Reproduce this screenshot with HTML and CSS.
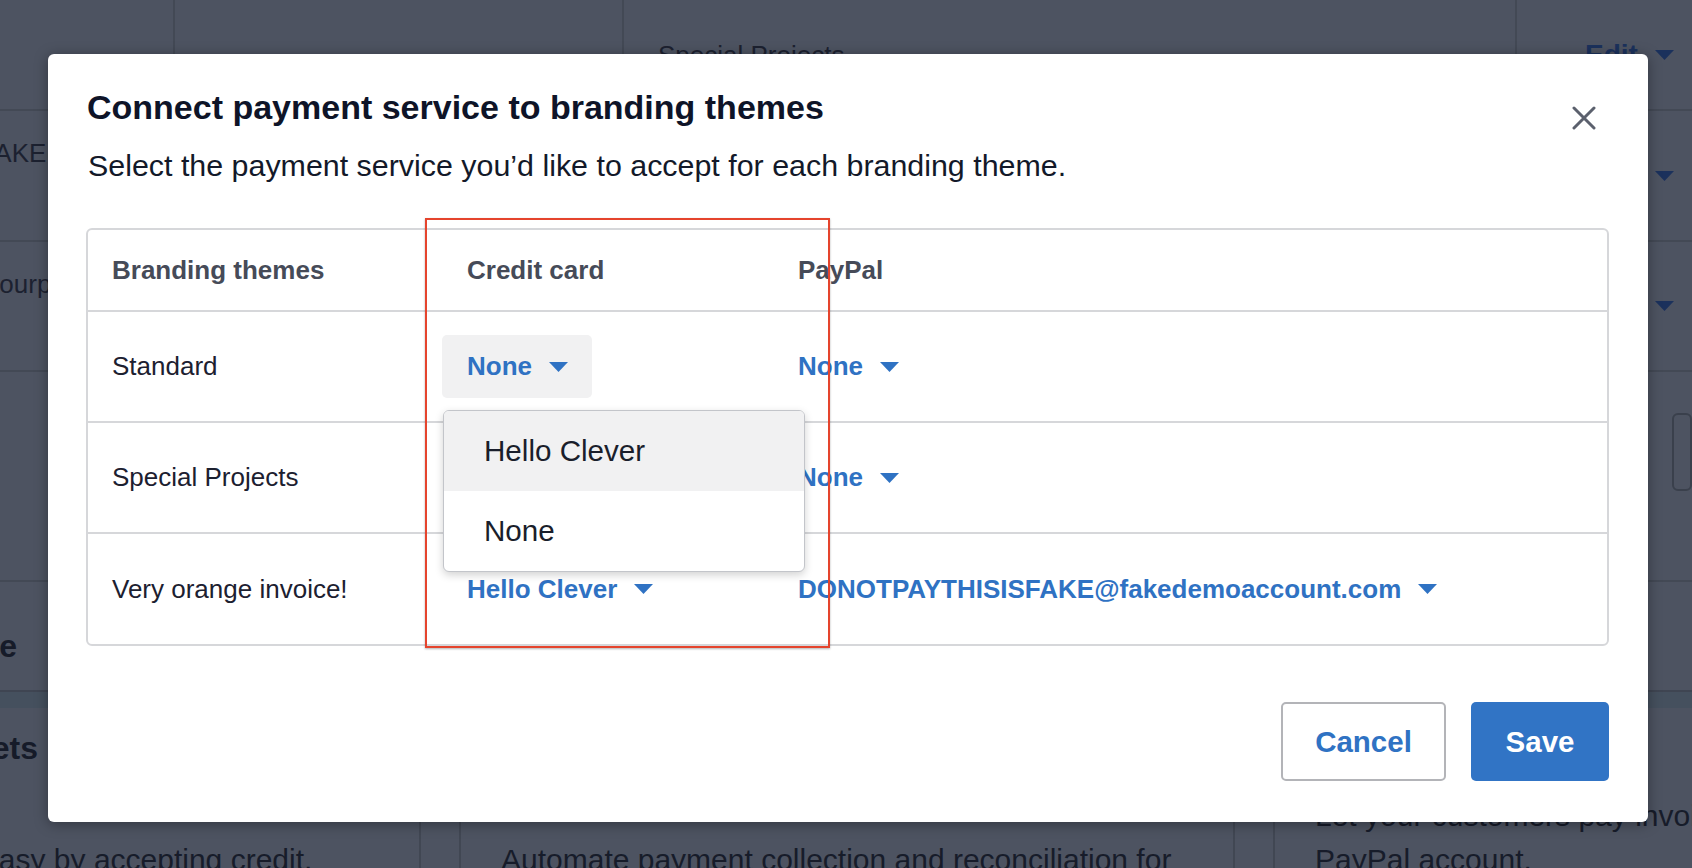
FILE: index.html
```html
<!DOCTYPE html>
<html lang="en">
<head>
<meta charset="utf-8">
<title>Connect payment service to branding themes</title>
<link rel="stylesheet" href="styles.css">
</head>
<body>
  <div class="page">
    <div class="bg-table">
      <div class="bg-row r1">
        <div class="bg-cell"></div>
        <div class="bg-cell"></div>
        <div class="bg-cell c3"><span class="bg-text">Special Projects</span></div>
        <div class="bg-cell c4"><span class="bg-edit">Edit <svg class="caret" viewBox="0 0 19 10" width="19" height="10"><path d="M0 0h19L9.5 10z" fill="currentColor"/></svg></span></div>
      </div>
      <div class="bg-row r2">
        <div class="bg-cell c1"><span class="bg-text shift-email">DONOTPAYTHISISFAKE@fakedemoaccount.com</span></div>
        <div class="bg-cell"></div>
        <div class="bg-cell"></div>
        <div class="bg-cell c4"><span class="bg-edit">Edit <svg class="caret" viewBox="0 0 19 10" width="19" height="10"><path d="M0 0h19L9.5 10z" fill="currentColor"/></svg></span></div>
      </div>
      <div class="bg-row r3">
        <div class="bg-cell c1"><span class="bg-text shift-purpose">hello@yourpurpose.com</span></div>
        <div class="bg-cell"></div>
        <div class="bg-cell"></div>
        <div class="bg-cell c4"><span class="bg-edit">Edit <svg class="caret" viewBox="0 0 19 10" width="19" height="10"><path d="M0 0h19L9.5 10z" fill="currentColor"/></svg></span></div>
      </div>
      <div class="bg-row r4">
        <div class="bg-cell"></div>
        <div class="bg-cell"></div>
        <div class="bg-cell"></div>
        <div class="bg-cell c4"><span class="bg-box"></span></div>
      </div>
    </div>
    <section class="bg-section">
      <div class="spill spill-e"><h2 class="bg-heading">Payment service</h2></div>
    </section>
    <div class="bg-band"></div>
    <section class="bg-cards">
      <article class="bg-card">
        <div class="spill spill-ets"><h3 class="bg-heading">Digital wallets</h3></div>
        <p class="bg-para shift-easy">Make getting paid easy by accepting credit,</p>
      </article>
      <article class="bg-card">
        <h3 class="bg-heading">Direct Debit</h3>
        <p class="bg-para">Automate payment collection and reconciliation for</p>
      </article>
      <article class="bg-card card3">
        <h3 class="bg-heading">PayPal</h3>
        <p class="bg-para">Let your customers pay invoices with their<br>PayPal account.</p>
      </article>
    </section>
  </div>

  <div class="modal" role="dialog" aria-labelledby="modal-title">
    <h1 class="modal-title" id="modal-title">Connect payment service to branding themes</h1>
    <p class="modal-sub">Select the payment service you’d like to accept for each branding theme.</p>
    <button class="close" aria-label="Close">
      <svg viewBox="0 0 24 24" width="24" height="24"><path d="M2 2L22 22M22 2L2 22" stroke="#5b606d" stroke-width="3" stroke-linecap="round" fill="none"/></svg>
    </button>

    <div class="table">
      <div class="trow head">
        <div class="cell c1">Branding themes</div>
        <div class="cell c2">Credit card</div>
        <div class="cell c3">PayPal</div>
      </div>
      <div class="trow">
        <div class="cell c1">Standard</div>
        <div class="cell">
          <div class="dd-wrap">
            <button class="dd open">None <svg class="caret" viewBox="0 0 19 10" width="19" height="10"><path d="M0 0h19L9.5 10z" fill="currentColor"/></svg></button>
            <ul class="menu">
              <li class="active">Hello Clever</li>
              <li>None</li>
            </ul>
          </div>
        </div>
        <div class="cell"><button class="dd">None <svg class="caret" viewBox="0 0 19 10" width="19" height="10"><path d="M0 0h19L9.5 10z" fill="currentColor"/></svg></button></div>
      </div>
      <div class="trow">
        <div class="cell c1">Special Projects</div>
        <div class="cell"><button class="dd">None <svg class="caret" viewBox="0 0 19 10" width="19" height="10"><path d="M0 0h19L9.5 10z" fill="currentColor"/></svg></button></div>
        <div class="cell"><button class="dd">None <svg class="caret" viewBox="0 0 19 10" width="19" height="10"><path d="M0 0h19L9.5 10z" fill="currentColor"/></svg></button></div>
      </div>
      <div class="trow last">
        <div class="cell c1">Very orange invoice!</div>
        <div class="cell"><button class="dd">Hello Clever <svg class="caret" viewBox="0 0 19 10" width="19" height="10"><path d="M0 0h19L9.5 10z" fill="currentColor"/></svg></button></div>
        <div class="cell"><button class="dd">DONOTPAYTHISISFAKE@fakedemoaccount.com <svg class="caret" viewBox="0 0 19 10" width="19" height="10"><path d="M0 0h19L9.5 10z" fill="currentColor"/></svg></button></div>
      </div>
    </div>

    <div class="modal-foot">
      <button class="btn btn-cancel">Cancel</button>
      <button class="btn btn-save">Save</button>
    </div>
  </div>

  <div class="annot" aria-hidden="true"></div>
</body>
</html>
```

FILE: styles.css
```css
* { box-sizing: border-box; }

html, body {
  margin: 0;
  padding: 0;
}

body {
  width: 1692px;
  height: 868px;
  overflow: hidden;
  position: relative;
  background: #4d5361;
  font-family: "Liberation Sans", Arial, sans-serif;
}

/* ---------- dimmed background page ---------- */
.page {
  width: 1692px;
  color: #181d2b;
}

.bg-row {
  display: grid;
  grid-template-columns: 175px 449px 893px 1fr;
  border-bottom: 2px solid #434955;
}
.bg-row.r1 { height: 111px; }
.bg-row.r2 { height: 131px; }
.bg-row.r3 { height: 130px; }
.bg-row.r4 { height: 210px; }

.bg-cell {
  display: flex;
  align-items: center;
  min-width: 0;
  border-right: 2px solid #434955;
  white-space: nowrap;
}
.bg-cell:last-child { border-right: none; }

.bg-cell.c1 { align-items: flex-start; padding-top: 27px; }
.bg-cell.c3 { padding-left: 34px; }
.bg-cell.c4 { padding-left: 68px; }

.bg-text {
  font-size: 26px;
  line-height: 30px;
  color: #1c2130;
}
.shift-email { margin-left: -246px; }
.shift-purpose { margin-left: -95px; }

.bg-edit {
  display: inline-flex;
  align-items: center;
  gap: 17px;
  font-size: 28px;
  font-weight: 700;
  color: #1b315c;
}

.r4 .bg-cell.c4 { align-items: flex-start; padding-left: 155px; }
.bg-box {
  display: block;
  width: 100px;
  height: 78px;
  margin-top: 41px;
  border: 2px solid #3a404c;
  border-radius: 6px;
}

.bg-section {
  height: 108px;
  padding-top: 45px;
}

.spill {
  display: flex;
  justify-content: flex-end;
  white-space: nowrap;
}
.spill-e { width: 17px; }
.spill-ets { width: 43px; }

.bg-heading {
  margin: 0;
  font-size: 32px;
  line-height: 38px;
  font-weight: 700;
  color: #161b29;
}

.bg-band {
  height: 18px;
  background: #45505e;
  border-top: 2px solid #3f4552;
}

.bg-cards {
  display: grid;
  grid-template-columns: 466px 776px 1fr;
  column-gap: 38px;
  margin-left: -45px;
  height: 200px;
}

.bg-card {
  padding: 21px 40px 0;
  border-left: 2px solid #414753;
  border-right: 2px solid #414753;
  white-space: nowrap;
}
.bg-card:first-child { border-left: none; }

.bg-para {
  margin: 71px 0 0;
  font-size: 30px;
  line-height: 44px;
  color: #171c2a;
}
.card3 .bg-para { margin-top: 27px; }
.shift-easy { margin-left: -258px; }

/* ---------- modal ---------- */
.modal {
  position: absolute;
  left: 48px;
  top: 54px;
  width: 1600px;
  height: 768px;
  background: #fff;
  border-radius: 6px;
  box-shadow: 0 2px 14px rgba(0, 0, 0, 0.35);
  padding: 33px 39px 41px 38px;
  display: flex;
  flex-direction: column;
}

.modal-title {
  margin: 0;
  padding-left: 1px;
  font-size: 34px;
  line-height: 40px;
  font-weight: 700;
  color: #0e1428;
}

.modal-sub {
  margin: 20px 0 0;
  padding-left: 2px;
  font-size: 30.4px;
  line-height: 36px;
  color: #131929;
}

.close {
  position: absolute;
  top: 52px;
  right: 52px;
  width: 24px;
  height: 24px;
  padding: 0;
  border: 0;
  background: none;
}
.close svg { display: block; }

.table {
  margin-top: 45px;
  border: 2px solid #d6d7da;
  border-radius: 6px;
}

.trow {
  display: grid;
  grid-template-columns: 354px 331px 1fr;
  height: 111px;
  border-bottom: 2px solid #d6d7da;
}
.trow.head { height: 82px; }
.trow.last { height: 110px; border-bottom: none; }

.cell {
  display: flex;
  align-items: center;
  min-width: 0;
  font-size: 26px;
  color: #1c2030;
  white-space: nowrap;
}
.cell.c1 { padding-left: 24px; }
.head .cell { font-weight: 700; color: #464b58; }
.head .cell.c2, .head .cell.c3 { padding-left: 25px; }

.dd-wrap { position: relative; }

.dd {
  display: inline-flex;
  align-items: center;
  gap: 17px;
  height: 63px;
  padding: 0 24px 0 25px;
  border: 0;
  border-radius: 5px;
  background: transparent;
  font-family: "Liberation Sans", Arial, sans-serif;
  font-size: 26px;
  font-weight: 700;
  color: #2f72c3;
  white-space: nowrap;
}
.dd.open { background: #f1f1f2; }

.caret { display: block; flex: none; }

.menu {
  position: absolute;
  z-index: 2;
  top: 75px;
  left: 1px;
  width: 362px;
  margin: 0;
  padding: 0;
  list-style: none;
  background: #fff;
  border: 1px solid #c3c5ca;
  border-radius: 6px;
  box-shadow: 0 3px 8px rgba(0, 0, 0, 0.18);
  overflow: hidden;
}
.menu li {
  height: 80px;
  display: flex;
  align-items: center;
  padding-left: 40px;
  font-size: 29.6px;
  color: #1a1e2b;
}
.menu li.active { background: #f1f1f2; }

.modal-foot {
  margin-top: auto;
  display: flex;
  justify-content: flex-end;
  gap: 25px;
}

.btn {
  height: 79px;
  border-radius: 5px;
  font-family: "Liberation Sans", Arial, sans-serif;
  font-size: 29.5px;
  font-weight: 700;
}
.btn-cancel {
  width: 165px;
  background: #fff;
  border: 2px solid #b3b4b8;
  color: #2f72c3;
}
.btn-save {
  width: 138px;
  background: #3174c5;
  border: 0;
  color: #fff;
}

/* ---------- red annotation rectangle ---------- */
.annot {
  position: absolute;
  left: 425px;
  top: 218px;
  width: 405px;
  height: 430px;
  border: 2px solid #e5442d;
  box-shadow: 0 1px 2px rgba(0, 0, 0, 0.3);
  pointer-events: none;
}
```
